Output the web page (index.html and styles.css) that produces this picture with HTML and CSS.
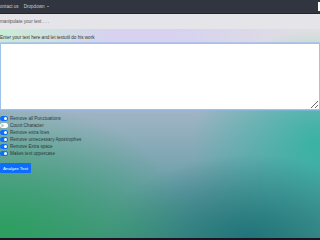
FILE: index.html
```html
<!DOCTYPE html>
<html>
<head>
<meta charset="utf-8">
<link rel="stylesheet" href="styles.css">
</head>
<body>
<nav class="nav">
  <span class="nav-link">ontact us</span>
  <span class="nav-link drop">Dropdown <span class="caret"></span></span>
  <span class="nav-search"></span>
</nav>
<div class="band">manipulate your text . . .</div>
<main class="main">
  <h1 class="title">Enter your text here and let textutil do his work</h1>
  <div class="area-wrap"><textarea class="area"></textarea></div>
  <ul class="opts">
    <li class="opt"><span class="sw on"></span>Remove all Punctuations</li>
    <li class="opt"><span class="sw"></span>Count Character</li>
    <li class="opt"><span class="sw on"></span>Remove extra lines</li>
    <li class="opt"><span class="sw on"></span>Remove unnecessary Apostrophes</li>
    <li class="opt"><span class="sw on"></span>Remove Extra space</li>
    <li class="opt"><span class="sw on"></span>Makes text uppercase</li>
  </ul>
  <button class="btn">Analyze Text</button>
</main>
<footer class="foot"></footer>
</body>
</html>
```

FILE: styles.css
```css
* { box-sizing: border-box; }
html, body { margin: 0; padding: 0; }
body {
  width: 320px;
  height: 240px;
  overflow: hidden;
  font-family: "Liberation Sans", Arial, sans-serif;
  font-size: 4.6px;
  color: #2a2a2a;
  background: #1c1424;
}
.nav {
  height: 14px;
  background: #31353f;
  display: flex;
  align-items: center;
  border-bottom: 1px solid #23262d;
}
.nav-link {
  color: #c9cbd0;
  font-size: 4.6px;
  margin-right: 5px;
}
.caret {
  display: inline-block;
  width: 0; height: 0;
  border-left: 1.2px solid transparent;
  border-right: 1.2px solid transparent;
  border-top: 1.4px solid #c9cbd0;
  vertical-align: middle;
  margin-left: 1px;
}
.nav-search {
  margin-left: auto;
  width: 2px;
  height: 9px;
  background: #fff;
}
.band {
  height: 15px;
  background: #e5e4e8;
  padding-top: 5px;
  color: #555;
}
.main {
  height: 209px;
  padding-top: 6px;
  background:
    radial-gradient(ellipse 60% 65% at 0% 100%, rgba(42,160,92,0.95), rgba(42,160,92,0) 100%),
    radial-gradient(ellipse 45% 40% at 78% 100%, rgba(30,115,120,0.95), rgba(30,115,120,0) 100%),
    radial-gradient(ellipse 40% 55% at 100% 55%, rgba(40,180,160,0.85), rgba(40,180,160,0) 100%),
    radial-gradient(ellipse 35% 25% at 0% 0%, rgba(200,240,210,0.9), rgba(200,240,210,0) 100%),
    linear-gradient(to right, rgba(214,210,240,1) 0%, rgba(214,210,240,1) 55%, rgba(224,224,224,1) 100%) top / 100% 20px no-repeat,
    linear-gradient(to bottom, #d4d3ec 0%, #9fb4c4 40%, #6b9fa8 75%, #4a9088 100%);
}
.title {
  margin: 0;
  font-size: 4.6px;
  font-weight: normal;
  color: #333;
  line-height: 5px;
}
.area-wrap { margin-top: 3px; }
.area {
  display: block;
  width: 320px;
  height: 67px;
  margin: 0;
  border: 1px solid #9ec2ea;
  box-shadow: 0 0 0 1px rgba(140,180,235,0.5);
  background: #fff;
  border-radius: 1px;
  resize: both;
  outline: none;
  padding: 2px;
}
.opts {
  list-style: none;
  margin: 5px 0 0 0;
  padding: 0;
}
.opt {
  display: flex;
  align-items: center;
  height: 7px;
  color: #2d3a3c;
}
.sw {
  flex: 0 0 8px;
  width: 8px;
  height: 4.5px;
  border-radius: 2.5px;
  background: #fff;
  margin-right: 2px;
  position: relative;
}
.sw::after {
  content: "";
  position: absolute;
  top: 0.75px; left: 0.75px;
  width: 3px; height: 3px;
  border-radius: 50%;
  background: #c8c8c8;
}
.sw.on { background: #0d6efd; }
.sw.on::after { left: auto; right: 0.75px; background: #fff; }
.btn {
  display: block;
  margin-top: 6px;
  width: 31px;
  height: 10px;
  background: #0d6efd;
  color: #fff;
  border: 0;
  border-radius: 1px;
  padding: 0;
  font-family: "Liberation Sans", Arial, sans-serif;
  font-size: 4.4px;
}
.foot {
  height: 2px;
  background: #1c1424;
}
```
